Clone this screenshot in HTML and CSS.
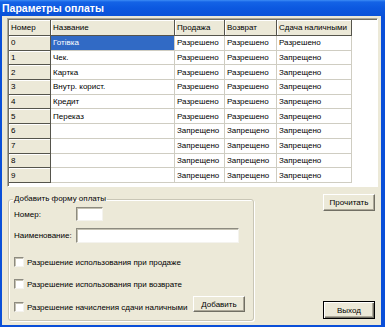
FILE: index.html
```html
<!DOCTYPE html>
<html lang="ru">
<head>
  <meta charset="UTF-8">
  <title>Параметры оплаты</title>
  <link rel="stylesheet" href="styles.css">
</head>
<body>
  <div class="window">
    <div class="titlebar">Параметры оплаты</div>
    <div class="client">
      <div class="grid-box">
        <div class="grid">
          <div class="hd">Номер</div><div class="hd">Название</div><div class="hd">Продажа</div><div class="hd">Возврат</div><div class="hd">Сдача наличными</div>
          <div class="rh">0</div><div class="c sel">Готівка</div><div class="c">Разрешено</div><div class="c">Разрешено</div><div class="c">Разрешено</div>
          <div class="rh">1</div><div class="c">Чек.</div><div class="c">Разрешено</div><div class="c">Разрешено</div><div class="c">Запрещено</div>
          <div class="rh">2</div><div class="c">Картка</div><div class="c">Разрешено</div><div class="c">Разрешено</div><div class="c">Запрещено</div>
          <div class="rh">3</div><div class="c">Внутр. корист.</div><div class="c">Разрешено</div><div class="c">Разрешено</div><div class="c">Запрещено</div>
          <div class="rh">4</div><div class="c">Кредит</div><div class="c">Разрешено</div><div class="c">Разрешено</div><div class="c">Запрещено</div>
          <div class="rh">5</div><div class="c">Переказ</div><div class="c">Разрешено</div><div class="c">Разрешено</div><div class="c">Запрещено</div>
          <div class="rh">6</div><div class="c"></div><div class="c">Запрещено</div><div class="c">Запрещено</div><div class="c">Запрещено</div>
          <div class="rh">7</div><div class="c"></div><div class="c">Запрещено</div><div class="c">Запрещено</div><div class="c">Запрещено</div>
          <div class="rh">8</div><div class="c"></div><div class="c">Запрещено</div><div class="c">Запрещено</div><div class="c">Запрещено</div>
          <div class="rh">9</div><div class="c"></div><div class="c">Запрещено</div><div class="c">Запрещено</div><div class="c">Запрещено</div>
        </div>
      </div>

      <div class="bottom">
        <fieldset class="group">
          <legend>Добавить форму оплаты</legend>
          <div class="field field-num">
            <label for="num">Номер:</label>
            <input type="text" id="num" class="input input-num">
          </div>
          <div class="field field-name">
            <label for="name">Наименование:</label>
            <input type="text" id="name" class="input input-name">
          </div>
          <label class="check-row row-sale"><input type="checkbox" class="check">Разрешение использования при продаже</label>
          <label class="check-row row-return"><input type="checkbox" class="check">Разрешение использования при возврате</label>
          <div class="last-row">
            <label class="check-row"><input type="checkbox" class="check">Разрешение начисления сдачи наличными</label>
            <button class="btn btn-add">Добавить</button>
          </div>
        </fieldset>
        <div class="side">
          <button class="btn">Прочитать</button>
          <button class="btn btn-default">Выход</button>
        </div>
      </div>
    </div>
  </div>
</body>
</html>
```

FILE: styles.css
```css
body {
  margin: 0;
  font-family: 'Liberation Sans', Arial, sans-serif;
  font-size: 8px;
  color: #000;
}
.window {
  width: 385px;
  height: 327px;
  display: flex;
  flex-direction: column;
  background-color: #0a4fd8;
}
.titlebar {
  height: 16px;
  line-height: 16px;
  padding-left: 2px;
  color: #fff;
  font-weight: bold;
  font-size: 10.5px;
  background: linear-gradient(to bottom, #3c8cf5 0, #1463e6 2px, #0c58e0 50%, #0a52d8 100%);
}
.client {
  flex: 1;
  margin: 0 4px 5px 2px;
  background-color: #ece9d8;
  display: flex;
  flex-direction: column;
}
.grid-box {
  margin: 2px 3px 0 5px;
  height: 169px;
  box-sizing: border-box;
  background-color: #fff;
  border: 1px solid;
  border-color: #aca899 #fff #fff #aca899;
  box-shadow: inset 1px 1px 0 #716f64;
  padding: 1px 0 0 1px;
}
.grid {
  display: grid;
  grid-template-columns: 42px 124px 50px 52px 75px;
  grid-template-rows: 16px;
  grid-auto-rows: 14.7px;
}
.grid > div {
  box-sizing: border-box;
  display: flex;
  align-items: center;
  padding-left: 2px;
  white-space: nowrap;
  overflow: hidden;
}
.c {
  border-right: 1px solid #cfcdc2;
  border-bottom: 1px solid #cfcdc2;
}
.hd, .rh {
  background-color: #ece9d8;
  border-right: 1px solid #55544c;
  border-bottom: 1px solid #55544c;
  box-shadow: inset 1px 1px 0 #fff;
}
.sel {
  background-color: #316ac5;
  color: #fff;
}
.bottom {
  flex: 1;
  display: flex;
  margin: 7px 6px 4px 6px;
}
.group {
  margin: 0;
  width: 246px;
  box-sizing: border-box;
  padding: 3px 8px 5px 5px;
  border: 1px solid #c9c6b6;
  border-radius: 3px;
  box-shadow: inset 1px 1px 0 #fff, 1px 1px 0 #fff;
  display: flex;
  flex-direction: column;
}
.group legend {
  padding: 0 1px;
  margin-left: -1px;
  line-height: 10px;
}
.field {
  display: flex;
  align-items: center;
}
.field label {
  width: 62px;
}
.field-name {
  margin-top: 7px;
}
.input {
  margin: 0;
  padding: 0;
  box-sizing: border-box;
  background-color: #fff;
  border: 1px solid;
  border-color: #8d8b80 #f4f3ee #f4f3ee #8d8b80;
  box-shadow: inset 1px 1px 0 #c4c1b2;
}
.input-num {
  width: 27px;
  height: 14px;
}
.input-name {
  width: 163px;
  height: 15px;
}
.check-row {
  display: flex;
  align-items: center;
  height: 16px;
}
.row-sale {
  margin-top: 11px;
}
.row-return {
  margin-top: 6px;
}
.check {
  appearance: none;
  -webkit-appearance: none;
  margin: 0 3px 0 0;
  width: 10px;
  height: 10px;
  box-sizing: border-box;
  background-color: #fff;
  border: 1px solid;
  border-color: #8d8b80 #f4f3ee #f4f3ee #8d8b80;
  box-shadow: inset 1px 1px 0 #c4c1b2;
}
.last-row {
  margin-top: 4px;
  display: flex;
  justify-content: space-between;
  align-items: flex-start;
}
.last-row .check-row {
  margin-top: 3px;
}
.btn {
  margin: 0;
  padding: 0;
  width: 52px;
  height: 17px;
  font-family: inherit;
  font-size: 8px;
  color: #000;
  background-color: #ece9d8;
  border: 1px solid;
  border-color: #fff #716f64 #716f64 #fff;
  box-shadow: inset -1px -1px 0 #aca899;
}
.btn-add {
  height: 16px;
}
.side {
  margin-left: auto;
  display: flex;
  flex-direction: column;
  justify-content: space-between;
}
.btn-default {
  height: 18px;
  margin-bottom: 2px;
  border: 1px solid #000;
  box-shadow: inset 1px 1px 0 #fff, inset -1px -1px 0 #716f64, inset -2px -2px 0 #aca899;
}
```
